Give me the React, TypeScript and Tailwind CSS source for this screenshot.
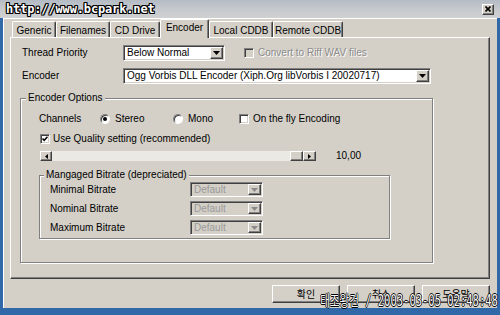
import React from "react";

const sunken =
  "border border-t-[#808080] border-l-[#808080] border-r-white border-b-white shadow-[inset_1px_1px_0_#404040,inset_-1px_-1px_0_#d4d0c8]";
const raised =
  "border border-t-white border-l-white border-r-[#404040] border-b-[#404040] shadow-[inset_-1px_-1px_0_#808080]";

function DownArrow({ disabled }: { disabled?: boolean }) {
  return (
    <svg width="7" height="4" viewBox="0 0 7 4">
      <path d="M0 0 H7 L3.5 4 Z" fill={disabled ? "#8a8a8a" : "#000"} />
    </svg>
  );
}

function ArrowBtn({ disabled }: { disabled?: boolean }) {
  return (
    <div className={`w-[13px] self-stretch bg-[#d4d0c8] flex items-center justify-center ${raised}`}>
      <DownArrow disabled={disabled} />
    </div>
  );
}

function Select({ text, className, disabled }: { text: string; className: string; disabled?: boolean }) {
  return (
    <div className={`${sunken} ${disabled ? "bg-[#d4d0c8]" : "bg-white"} flex items-stretch p-[1px] ${className}`}>
      <div
        className={`flex-1 pl-[2px] flex items-center whitespace-nowrap overflow-hidden ${
          disabled ? "text-[#9a9a9a]" : "text-black"
        }`}
      >
        {text}
      </div>
      <ArrowBtn disabled={disabled} />
    </div>
  );
}

function Check({ checked, disabled }: { checked?: boolean; disabled?: boolean }) {
  return (
    <div
      className={`w-[10px] h-[10px] shrink-0 ${sunken} ${
        disabled ? "bg-[#d4d0c8]" : "bg-white"
      } flex items-center justify-center`}
    >
      {checked && (
        <svg width="6" height="6" viewBox="0 0 6 6">
          <path d="M0.5 2.5 L2.2 4.3 L5.5 0.8" stroke="#000" strokeWidth="1.5" fill="none" />
        </svg>
      )}
    </div>
  );
}

function Radio({ checked }: { checked?: boolean }) {
  return (
    <div className="w-[10px] h-[10px] shrink-0 rounded-full border border-t-[#808080] border-l-[#808080] border-r-white border-b-white bg-white shadow-[inset_1px_1px_0_#404040] flex items-center justify-center">
      {checked && <div className="w-[4px] h-[4px] rounded-full bg-black" />}
    </div>
  );
}

function Tab({ label, w, selected }: { label: string; w: string; selected?: boolean }) {
  return (
    <div
      className={`${w} ${
        selected ? "h-[19px] -mb-[1px] z-10 pt-[2px]" : "h-[16px] pt-[3px]"
      } relative bg-[#d4d0c8] border-t border-l border-t-white border-l-white border-r border-r-[#404040] shadow-[inset_-1px_0_0_#808080] rounded-t-[2px] flex justify-center leading-[12px] whitespace-nowrap`}
    >
      {label}
    </div>
  );
}

export default function App() {
  return (
    <div className="w-[500px] h-[315px] bg-[#3068a8] relative overflow-hidden font-['Liberation_Sans','Noto_Sans_CJK_KR',sans-serif] text-[10px] text-black">
      {/* title bar */}
      <div className="h-[18px] bg-gradient-to-b from-[#b4bbc4] via-[#c6c9cd] to-[#cfd0d1] flex items-center justify-between pl-[6px] pr-[6px]">
        <span className="font-['DejaVu_Sans_Mono',monospace] font-bold text-[12px] leading-[14px] text-white tracking-[-0.15px] [text-shadow:1px_0_#000,-1px_0_#000,0_1px_#000,0_-1px_#000,1px_1px_#000,-1px_-1px_#000,1px_-1px_#000,-1px_1px_#000]">
          http://www.bcpark.net
        </span>
        <div className={`w-[12px] h-[11px] bg-[#d4d0c8] ${raised} flex items-center justify-center`}>
          <svg width="6" height="6" viewBox="0 0 6 6">
            <path d="M0.5 0.5 L5.5 5.5 M5.5 0.5 L0.5 5.5" stroke="#000" strokeWidth="1.6" />
          </svg>
        </div>
      </div>

      {/* dialog body */}
      <div className="mx-[3px] h-[290px] bg-[#d4d0c8] border-t border-l border-t-white border-l-white pl-[6px] pr-[7px] flex flex-col">
        {/* tabs */}
        <div className="h-[18px] flex items-end pl-[2px]">
          <Tab label="Generic" w="w-[44px]" />
          <Tab label="Filenames" w="w-[54px]" />
          <Tab label="CD Drive" w="w-[50px]" />
          <Tab label="Encoder" w="w-[49px]" selected />
          <Tab label="Local CDDB" w="w-[64px]" />
          <Tab label="Remote CDDB" w="w-[70px]" />
        </div>

        {/* tab panel */}
        <div
          className={`w-[480px] h-[242px] bg-[#d4d0c8] ${raised} pl-[9px] pt-[7px] flex flex-col leading-[12px]`}
        >
          {/* row 1 */}
          <div className="ml-[2px] h-[16px] flex items-center">
            <div className="w-[101px]">Thread Priority</div>
            <Select text="Below Normal" className="w-[102px] h-[16px]" />
            <div className="ml-[19px] flex items-center">
              <Check disabled />
              <span className="ml-[4px] text-[#8c8c8c] [text-shadow:1px_1px_0_#fff]">Convert to Riff WAV files</span>
            </div>
          </div>
          {/* row 2 */}
          <div className="ml-[2px] mt-[7px] h-[16px] flex items-center">
            <div className="w-[101px]">Encoder</div>
            <Select
              text="Ogg Vorbis DLL Encoder (Xiph.Org libVorbis I 20020717)"
              className="w-[308px] h-[16px]"
            />
          </div>

          {/* Encoder Options group */}
          <div className="relative mt-[14px] w-[413px] h-[165px] border border-[#808080] shadow-[1px_1px_0_#fff,inset_1px_1px_0_#fff] pl-[18px] pt-[14px] flex flex-col">
            <span className="absolute -top-[7px] left-[5px] px-[2px] bg-[#d4d0c8] leading-[12px]">
              Encoder Options
            </span>
            {/* channels */}
            <div className="h-[12px] flex items-center">
              <div className="w-[61px]">Channels</div>
              <div className="w-[73px] flex items-center">
                <Radio checked />
                <span className="ml-[5px]">Stereo</span>
              </div>
              <div className="w-[66px] flex items-center">
                <Radio />
                <span className="ml-[5px]">Mono</span>
              </div>
              <div className="flex items-center">
                <Check />
                <span className="ml-[4px]">On the fly Encoding</span>
              </div>
            </div>
            {/* quality */}
            <div className="mt-[8px] ml-[1px] h-[12px] flex items-center">
              <Check checked />
              <span className="ml-[3px]">Use Quality setting (recommended)</span>
            </div>
            {/* slider */}
            <div className="mt-[6px] ml-[1px] h-[10px] flex items-center">
              <div className={`w-[12px] h-[10px] bg-[#d4d0c8] ${raised} flex items-center justify-center`}>
                <svg width="3" height="5" viewBox="0 0 3 5">
                  <path d="M3 0 V5 L0 2.5 Z" fill="#000" />
                </svg>
              </div>
              <div className="w-[238px] h-[10px] bg-[#ebe9e4]" />
              <div className={`w-[13px] h-[10px] bg-[#d4d0c8] ${raised}`} />
              <div className={`w-[13px] h-[10px] bg-[#d4d0c8] ${raised} flex items-center justify-center`}>
                <svg width="3" height="5" viewBox="0 0 3 5">
                  <path d="M0 0 V5 L3 2.5 Z" fill="#000" />
                </svg>
              </div>
              <span className="ml-[20px]">10,00</span>
            </div>

            {/* Managed bitrate group */}
            <div className="relative mt-[14px] w-[351px] h-[64px] border border-[#808080] shadow-[1px_1px_0_#fff,inset_1px_1px_0_#fff] pl-[10px] pt-[6px] flex flex-col gap-[4px]">
              <span className="absolute -top-[7px] left-[4px] px-[2px] bg-[#d4d0c8] leading-[12px]">
                Mangaged Bitrate (depreciated)
              </span>
              {["Minimal Bitrate", "Nominal Bitrate", "Maximum Bitrate"].map((l) => (
                <div key={l} className="h-[15px] flex items-center">
                  <div className="w-[140px]">{l}</div>
                  <Select text="Default" className="w-[73px] h-[15px]" disabled />
                </div>
              ))}
            </div>
          </div>
        </div>

        {/* buttons */}
        <div className="mt-[6px] flex justify-end gap-[7px]">
          {["확인", "취소", "도움말"].map((b) => (
            <div
              key={b}
              className={`w-[68px] h-[18px] bg-[#d4d0c8] ${raised} flex items-center justify-center font-['Noto_Sans_CJK_KR',sans-serif] text-[10px] leading-[12px]`}
            >
              {b}
            </div>
          ))}
        </div>
      </div>

      {/* watermark overlay */}
      <div className="absolute top-[293px] right-[2px] origin-right scale-x-[0.7] whitespace-nowrap font-['DejaVu_Sans_Mono','Noto_Sans_CJK_KR',monospace] text-[15px] leading-[17px] text-white [text-shadow:1px_0_#000,-1px_0_#000,0_1px_#000,0_-1px_#000]">
        태조왕건 / 2003-03-05 02:48:48
      </div>
    </div>
  );
}
